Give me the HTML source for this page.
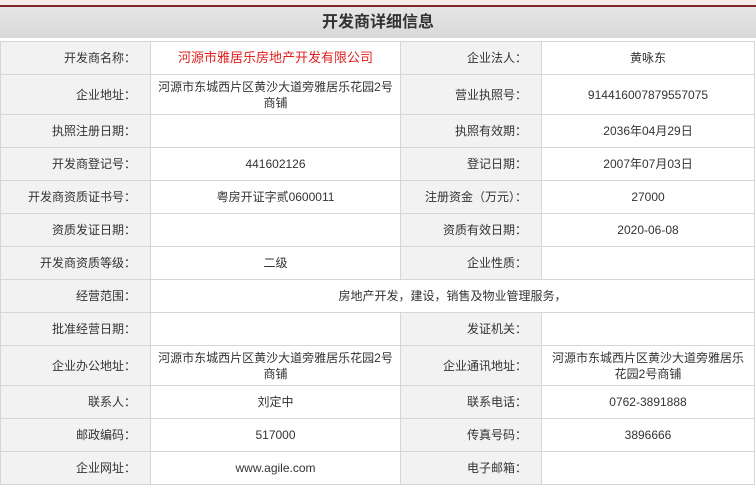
<!DOCTYPE html><html><head><meta charset="utf-8"><style>
body{margin:0;width:756px;height:486px;overflow:hidden;background:#fff;font-family:"Liberation Sans","Noto Sans CJK SC",sans-serif;font-size:12px;color:#333}
.top{height:5px;background:#f7ecec;border-bottom:2px solid #7a2a2a}
.hd{height:31px;background:linear-gradient(#e6e6e6,#d8d8d8);text-align:center;line-height:31px;font-size:16px;font-weight:bold;color:#333;padding-left:0}
table{border-collapse:collapse;width:754px;margin-top:3px;table-layout:fixed}
td{border:1px solid #d6d6d6;height:32px;padding:0 6px;text-align:center;line-height:16px}
td.l{background:#f2f2f2;text-align:right;padding-right:14px}
tr.t td{height:39px}
.red{color:#e02020;font-size:13px}
</style></head><body>
<div class="top"></div>
<div class="hd">开发商详细信息</div>
<table>
<colgroup><col style="width:150px"><col style="width:250px"><col style="width:141px"><col style="width:213px"></colgroup>
<tr><td class="l">开发商名称：</td><td class="red">河源市雅居乐房地产开发有限公司</td><td class="l">企业法人：</td><td>黄咏东</td></tr>
<tr class="t"><td class="l">企业地址：</td><td>河源市东城西片区黄沙大道旁雅居乐花园2号商铺</td><td class="l">营业执照号：</td><td>914416007879557075</td></tr>
<tr><td class="l">执照注册日期：</td><td></td><td class="l">执照有效期：</td><td>2036年04月29日</td></tr>
<tr><td class="l">开发商登记号：</td><td>441602126</td><td class="l">登记日期：</td><td>2007年07月03日</td></tr>
<tr><td class="l">开发商资质证书号：</td><td>粤房开证字贰0600011</td><td class="l">注册资金（万元）：</td><td>27000</td></tr>
<tr><td class="l">资质发证日期：</td><td></td><td class="l">资质有效日期：</td><td>2020-06-08</td></tr>
<tr><td class="l">开发商资质等级：</td><td>二级</td><td class="l">企业性质：</td><td></td></tr>
<tr><td class="l">经营范围：</td><td colspan="3">房地产开发，建设，销售及物业管理服务，</td></tr>
<tr><td class="l">批准经营日期：</td><td></td><td class="l">发证机关：</td><td></td></tr>
<tr class="t"><td class="l">企业办公地址：</td><td>河源市东城西片区黄沙大道旁雅居乐花园2号商铺</td><td class="l">企业通讯地址：</td><td>河源市东城西片区黄沙大道旁雅居乐花园2号商铺</td></tr>
<tr><td class="l">联系人：</td><td>刘定中</td><td class="l">联系电话：</td><td>0762-3891888</td></tr>
<tr><td class="l">邮政编码：</td><td>517000</td><td class="l">传真号码：</td><td>3896666</td></tr>
<tr><td class="l">企业网址：</td><td>www.agile.com</td><td class="l">电子邮箱：</td><td></td></tr>
</table>
</body></html>
